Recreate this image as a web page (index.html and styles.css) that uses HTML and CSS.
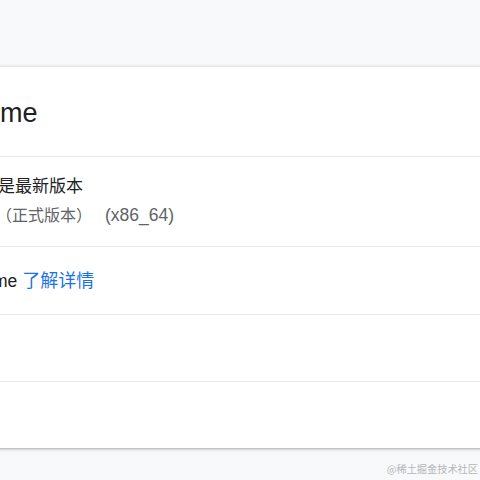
FILE: index.html
```html
<!DOCTYPE html>
<html lang="zh-CN">
<head>
<meta charset="utf-8">
<title>关于 Chrome</title>
<link rel="stylesheet" href="styles.css">
</head>
<body>
<div class="page">
  <section class="card">
    <div class="row header"><h1 class="title">me</h1></div>
    <div class="row status">
      <div class="status-main">是最新版本</div>
      <div class="status-sub"><span class="cjk">（正式版本）</span><span class="arch">(x86_64)</span></div>
    </div>
    <div class="row learn">
      <span class="learn-text">me <a class="link" href="#">了解详情</a></span>
    </div>
    <div class="row empty"></div>
    <div class="row empty last"></div>
  </section>
</div>
<div class="watermark">@稀土掘金技术社区</div>
</body>
</html>
```

FILE: styles.css
```css
html, body {
  margin: 0;
  padding: 0;
  background: #f8f9fa;
  width: 480px;
  height: 480px;
  overflow: hidden;
  font-family: "Liberation Sans", "Noto Sans CJK SC", sans-serif;
  color: #202124;
}
.page {
  padding-top: 66px;
}
.card {
  background: #ffffff;
  margin: 0 -10px;
  border-top: 1px solid #e6e7e9;
  box-shadow: 0 1px 2px rgba(60, 64, 67, 0.3), 0 1px 3px 1px rgba(60, 64, 67, 0.12);
}
.row {
  display: flex;
  flex-direction: column;
  justify-content: center;
  padding-left: 10px;
  border-bottom: 1px solid #e8eaed;
  box-sizing: border-box;
}
.row.last { border-bottom: none; }
.header { height: 90px; }
.title {
  margin: 0;
  font-size: 27px;
  font-weight: 400;
  line-height: 32px;
  padding-top: 2px;
}
.status { height: 90px; padding-bottom: 2px; }
.status-main {
  font-size: 17px;
  line-height: 29px;
  margin-left: -2px;
}
.status-sub {
  display: flex;
  align-items: baseline;
  line-height: 29px;
  color: #5f6368;
  margin-left: -4px;
}
.status-sub .cjk {
  font-size: 16px;
}
.status-sub .arch {
  font-size: 17.5px;
  margin-left: 13px;
}
.learn { height: 68px; }
.learn-text {
  font-size: 17.5px;
  line-height: 24px;
  margin-left: -7px;
}
.link {
  color: #1a73e8;
  text-decoration: none;
  font-size: 18px;
}
.empty { height: 67px; }
.last { height: 66px; }
.watermark {
  position: absolute;
  right: 2px;
  top: 461px;
  font-size: 10.2px;
  line-height: 16px;
  color: #b4b7bb;
  font-family: "Noto Sans CJK SC", sans-serif;
}
```
